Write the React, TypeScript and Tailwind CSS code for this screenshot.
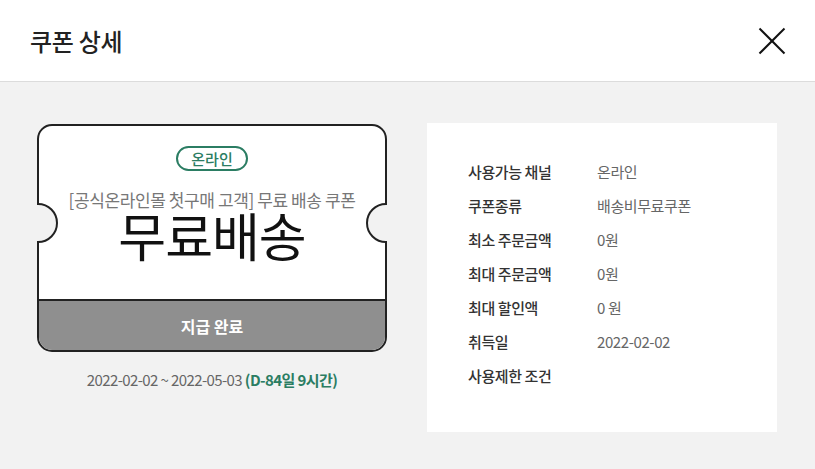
const font = { fontFamily: '"Noto Sans CJK KR", "Noto Sans", sans-serif' };

interface InfoRow {
  label: string;
  value: string;
}

const infoRows: InfoRow[] = [
  { label: '사용가능 채널', value: '온라인' },
  { label: '쿠폰종류', value: '배송비무료쿠폰' },
  { label: '최소 주문금액', value: '0원' },
  { label: '최대 주문금액', value: '0원' },
  { label: '최대 할인액', value: '0 원' },
  { label: '취득일', value: '2022-02-02' },
  { label: '사용제한 조건', value: '' },
];

function CloseIcon() {
  return (
    <svg width="28" height="28" viewBox="0 0 28 28" fill="none">
      <line x1="1.5" y1="1.5" x2="26.5" y2="26.5" stroke="#111" strokeWidth="2" />
      <line x1="26.5" y1="1.5" x2="1.5" y2="26.5" stroke="#111" strokeWidth="2" />
    </svg>
  );
}

function Coupon() {
  return (
    <div className="relative w-[350px] h-[228px] flex flex-col border-2 border-[#222] rounded-[15px] bg-white">
      {/* side notches */}
      <div className="absolute left-[-21px] top-[77px] w-10 h-10 rounded-full border-2 border-[#222] bg-[#f2f2f2] [clip-path:inset(0_0_0_19px)]" />
      <div className="absolute right-[-21px] top-[77px] w-10 h-10 rounded-full border-2 border-[#222] bg-[#f2f2f2] [clip-path:inset(0_19px_0_0)]" />

      <div className="flex-1 flex flex-col items-center pt-5">
        <span className="h-[25px] px-[13px] flex items-center rounded-full border-2 border-[#2b7d63] text-[#2b7d63] text-[15px] font-medium leading-none">
          온라인
        </span>
        <p className="mt-[19px] text-[17px] leading-[20px] text-[#777] tracking-[-0.4px]">
          [공식온라인몰 첫구매 고객] 무료 배송 쿠폰
        </p>
        <p className="mt-px text-[52px] leading-[48px] text-[#111] tracking-[-1px]">무료배송</p>
      </div>

      <div className="h-[51px] flex items-center justify-center border-t-2 border-[#222] bg-[#8f8f8f] rounded-b-[13px]">
        <span className="text-white text-[16px] font-bold">지급 완료</span>
      </div>
    </div>
  );
}

export default function App() {
  return (
    <div className="w-[815px] h-[469px] bg-[#f2f2f2] flex flex-col overflow-hidden" style={font}>
      <div className="h-[82px] shrink-0 bg-white border-b border-[#dcdcdc] flex items-center justify-between pl-[30px] pr-[29px]">
        <h1 className="text-[24px] font-medium text-[#222] tracking-[-0.3px]">쿠폰 상세</h1>
        <button className="w-7 h-7 flex items-center justify-center">
          <CloseIcon />
        </button>
      </div>

      <div className="flex items-start pt-[41px] pl-[37px] gap-[40px]">
        <div className="mt-px flex flex-col items-center">
          <Coupon />
          <p className="mt-[18px] text-[15px] leading-5 text-[#666] tracking-[-0.6px]">
            2022-02-02 ~ 2022-05-03{' '}
            <span className="text-[#2b7d63] font-bold">(D-84일 9시간)</span>
          </p>
        </div>

        <div className="w-[350px] h-[309px] bg-white pt-8 pl-[41px]">
          {infoRows.map((row) => (
            <div key={row.label} className="h-[34px] flex items-center text-[15px] tracking-[-0.4px]">
              <span className="w-[129px] text-[#333] font-medium">{row.label}</span>
              <span className="text-[#666]">{row.value}</span>
            </div>
          ))}
        </div>
      </div>
    </div>
  );
}
